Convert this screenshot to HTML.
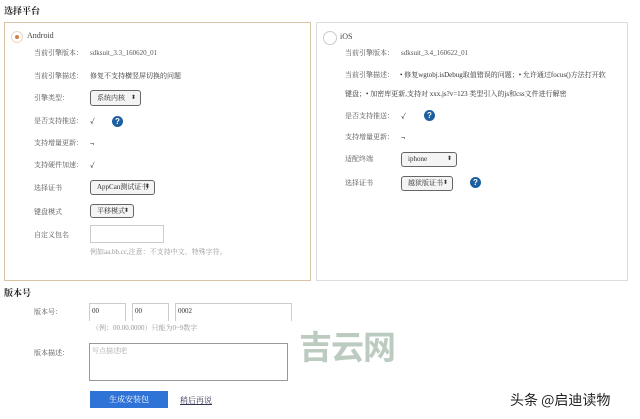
<!DOCTYPE html>
<html><head><meta charset="utf-8"><style>
body{margin:0;width:640px;height:419px;background:#fff;position:relative;overflow:hidden;font-family:"Liberation Serif","Noto Serif CJK SC",serif;font-size:7px;color:#555}
.a{position:absolute;white-space:nowrap;line-height:10px}
.box{position:absolute;border:1px solid #d8c3a5}
.sel{position:absolute;border:1px solid #666;border-radius:3px;background:#f4f4f4;font-size:7px;line-height:13px;padding-left:6px;box-sizing:border-box;color:#333}
.sel:after{content:"⬍";position:absolute;right:4px;top:0;font-size:6px}
.inp{position:absolute;border:1px solid #ccc;box-sizing:border-box;font-size:7px;padding-left:2px;line-height:15px;color:#333}
.q{position:absolute;width:11px;height:11px;border-radius:50%;background:#1d5fa0;color:#fff;font:bold 8px/11px "Liberation Sans",sans-serif;text-align:center}
.ck{color:#222;font-weight:bold}
h3{position:absolute;margin:0;font:bold 9px "Liberation Serif","Noto Serif CJK SC",serif;color:#222}
</style></head><body>
<h3 style="left:4px;top:4px">选择平台</h3>
<div class="box" style="left:4px;top:22px;width:305px;height:257px"></div>
<div class="box" style="left:316px;top:22px;width:310px;height:257px;border-color:#ddd"></div>
<div style="position:absolute;left:11px;top:31px;width:10px;height:10px;border-radius:50%;border:1px solid #eed6c0;background:#fff"></div>
<div style="position:absolute;left:15px;top:35px;width:4px;height:4px;border-radius:50%;background:#d08050"></div>
<div class="a" style="left:27px;top:31px;font-size:8px;color:#444">Android</div>
<div class="a" style="left:34px;top:48px">当前引擎版本：</div><div class="a" style="left:90px;top:48px">sdksuit_3.3_160620_01</div>
<div class="a" style="left:34px;top:71px">当前引擎描述：</div><div class="a" style="left:90px;top:71px;color:#333">修复不支持横竖屏切换的问题</div>
<div class="a" style="left:34px;top:93px">引擎类型：</div><div class="sel" style="left:90px;top:90px;width:51px;height:16px;line-height:14px">系统内核</div>
<div class="a" style="left:34px;top:116px">是否支持推送：</div><div class="a ck" style="left:90px;top:117px">✓</div><div class="q" style="left:112px;top:116px">?</div>
<div class="a" style="left:34px;top:138px">支持增量更新：</div><div class="a ck" style="left:90px;top:139px">¬</div>
<div class="a" style="left:34px;top:160px">支持硬件加速：</div><div class="a ck" style="left:90px;top:161px">✓</div>
<div class="a" style="left:34px;top:183px">选择证书</div><div class="sel" style="left:90px;top:180px;width:65px;height:15px">AppCan测试证书</div>
<div class="a" style="left:34px;top:207px">键盘模式</div><div class="sel" style="left:90px;top:204px;width:44px;height:14px">平移模式</div>
<div class="a" style="left:34px;top:230px">自定义包名</div><div class="inp" style="left:90px;top:225px;width:74px;height:18px"></div>
<div class="a" style="left:90px;top:247px;color:#999">例如aa.bb.cc,注意：不支持中文、特殊字符。</div>

<div style="position:absolute;left:323px;top:31px;width:12px;height:12px;border-radius:50%;border:1px solid #ccc"></div>
<div class="a" style="left:340px;top:32px;font-size:8px;color:#444">iOS</div>
<div class="a" style="left:345px;top:48px">当前引擎版本：</div><div class="a" style="left:401px;top:48px">sdksuit_3.4_160622_01</div>
<div class="a" style="left:345px;top:70px">当前引擎描述：</div><div class="a" style="left:400px;top:70px;color:#333">• 修复wgtobj.isDebug取值错误的问题；• 允许通过focus()方法打开软</div>
<div class="a" style="left:345px;top:89px;color:#333">键盘；• 加密库更新,支持对 xxx.js?v=123 类型引入的js和css文件进行解密</div>
<div class="a" style="left:345px;top:111px">是否支持推送：</div><div class="a ck" style="left:401px;top:112px">✓</div><div class="q" style="left:424px;top:110px">?</div>
<div class="a" style="left:345px;top:132px">支持增量更新：</div><div class="a ck" style="left:401px;top:133px">¬</div>
<div class="a" style="left:345px;top:154px">适配终端</div><div class="sel" style="left:401px;top:152px;width:56px;height:15px">iphone</div>
<div class="a" style="left:345px;top:178px">选择证书</div><div class="sel" style="left:401px;top:176px;width:52px;height:15px">越狱版证书</div><div class="q" style="left:470px;top:177px">?</div>

<h3 style="left:4px;top:286px">版本号</h3>
<div class="a" style="left:34px;top:307px">版本号：</div>
<div class="inp" style="left:89px;top:303px;width:37px;height:18px;border-bottom:none">00</div>
<div class="inp" style="left:132px;top:303px;width:37px;height:18px;border-bottom:none">00</div>
<div class="inp" style="left:175px;top:303px;width:117px;height:18px;border-bottom:none">0002</div>
<div class="a" style="left:92px;top:323px;color:#999">（例：00.00.0000）只能为0~9数字</div>
<div class="a" style="left:34px;top:348px">版本描述：</div>
<div class="inp" style="left:89px;top:343px;width:199px;height:38px;border-color:#999;line-height:14px;color:#aaa">写点描述吧</div>
<div style="position:absolute;left:90px;top:391px;width:78px;height:17px;background:#2f73d6;color:#fff;font-size:8px;line-height:17px;text-align:center">生成安装包</div>
<div class="a" style="left:180px;top:396px;font-size:8px;color:#335;text-decoration:underline">稍后再说</div>
<div class="a" style="left:299px;top:326px;font:bold 33px/38px 'Noto Sans CJK SC',sans-serif;color:#bccbc0;letter-spacing:-1px">吉云网</div>
<div class="a" style="left:510px;top:392px;font:14px/16px 'Noto Sans CJK SC',sans-serif;color:#222">头条 @启迪读物</div>
</body></html>
